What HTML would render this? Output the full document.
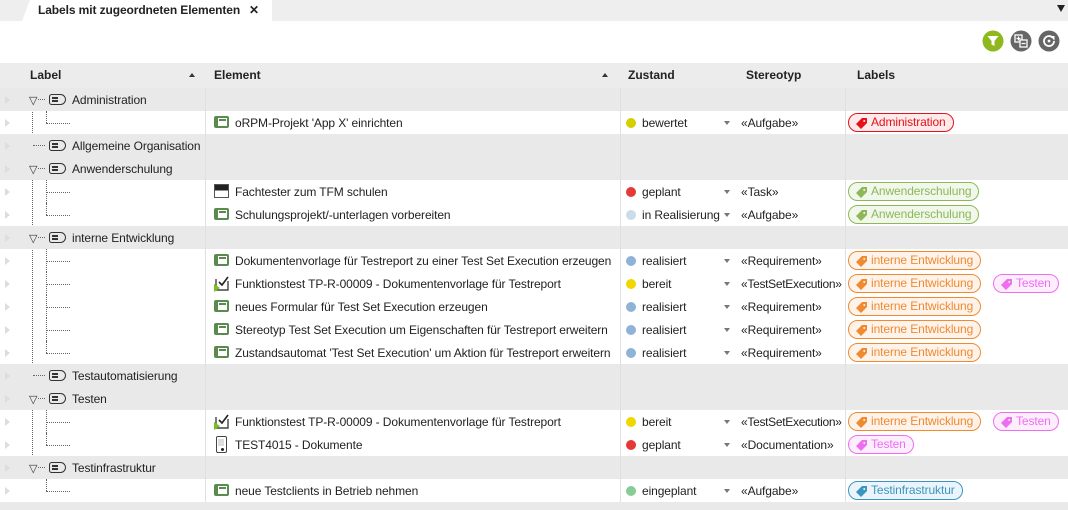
<!DOCTYPE html>
<html><head><meta charset="utf-8"><style>
*{margin:0;padding:0;box-sizing:border-box}
body{width:1068px;height:510px;overflow:hidden;background:#fff;font-family:"Segoe UI","Liberation Sans",sans-serif;font-size:12px;color:#222;position:relative}
.a{position:absolute;white-space:nowrap}
.row{position:absolute;left:0;width:1068px;height:23px}
.g{background:#e9e9e9}
.t{position:absolute;top:5px;white-space:nowrap;line-height:15px;letter-spacing:-0.1px}
.tri{position:absolute;left:5px;top:8px;width:0;height:0;border-left:5px solid #ddd;border-top:4px solid transparent;border-bottom:4px solid transparent}
.vl{position:absolute;width:1px;background:#e0e0e0;top:0;height:23px}
.dot{position:absolute;left:626px;top:7px;width:10px;height:10px;border-radius:50%}
.dd{position:absolute;left:724px;top:10px;border-top:4px solid #777;border-left:3.5px solid transparent;border-right:3.5px solid transparent}
.pill{position:absolute;top:2px;height:19px;border-radius:10px;border:1px solid;padding:0 7px 0 22px;line-height:17px;font-size:12px;letter-spacing:-0.1px}
.pill svg{position:absolute;left:6px;top:3px}
.ico{position:absolute;left:214px;top:5px;width:15px;height:12px;border:2px solid #5a8a4e;border-left-width:4px;border-radius:2px;background:#fff}
.ico:after{content:"";position:absolute;left:1px;top:1px;width:7px;height:1.5px;background:#5a8a4e}
.lab{position:absolute;top:6px;width:17px;height:11px;border:1.5px solid #333;border-radius:3px 6px 6px 3px}
.lab:before{content:"";position:absolute;left:2px;top:2px;width:6px;height:1.5px;background:#333;box-shadow:0 3px 0 #333}
.dv{position:absolute;border-left:1px dotted #666}
.dh{position:absolute;border-top:1px dotted #666}
.exp{position:absolute;left:29px;top:6px;font-size:11px;color:#333}
</style></head><body>
<div class="a" style="left:0;top:0;width:1068px;height:21px;background:#eeeeee"></div>
<div class="a" style="left:22px;top:0;width:250px;height:21px;background:#fff;clip-path:polygon(8px 0,100% 0,100% 100%,0 100%)"></div>
<div class="a" style="left:38px;top:3px;font-weight:bold;font-size:12px;letter-spacing:-0.1px">Labels mit zugeordneten Elementen</div>
<div class="a" style="left:249px;top:3px;font-weight:bold;font-size:12px">✕</div>
<div class="a" style="left:1057px;top:5px;border-top:7px solid #222;border-left:4px solid transparent;border-right:4px solid transparent"></div>
<svg class="a" style="left:982px;top:30px" width="22" height="22"><circle cx="11" cy="11" r="10.5" fill="#8fb81e"/><path d="M5.5 6h11l-4 5v5l-3-1.5v-3.5z" fill="#fff"/></svg>
<svg class="a" style="left:1010px;top:30px" width="22" height="22"><circle cx="11" cy="11" r="10.5" fill="#666"/><rect x="5" y="5" width="7" height="7" fill="none" stroke="#fff" stroke-width="1.3"/><rect x="10" y="10" width="7" height="7" fill="#666" stroke="#fff" stroke-width="1.3"/><path d="M6.5 8.5h4M8.5 6.5v4M11.5 13.5h4" stroke="#fff" stroke-width="1.2"/></svg>
<svg class="a" style="left:1038px;top:30px" width="22" height="22"><circle cx="11" cy="11" r="10.5" fill="#666"/><path d="M14.5 7.5A5 5 0 1 0 16 11" fill="none" stroke="#fff" stroke-width="1.8"/><path d="M12 6h4.5v4.5z" fill="#fff"/><circle cx="11" cy="11" r="1.4" fill="#fff"/></svg>
<div class="a" style="left:0;top:63px;width:1068px;height:25px;background:#ececec"></div>
<div class="a" style="left:30px;top:68px;font-weight:bold">Label</div>
<div class="a" style="left:189px;top:73px;border-bottom:4px solid #333;border-left:3.5px solid transparent;border-right:3.5px solid transparent"></div>
<div class="a" style="left:214px;top:68px;font-weight:bold">Element</div>
<div class="a" style="left:602px;top:73px;border-bottom:4px solid #333;border-left:3.5px solid transparent;border-right:3.5px solid transparent"></div>
<div class="a" style="left:628px;top:68px;font-weight:bold">Zustand</div>
<div class="a" style="left:746px;top:68px;font-weight:bold">Stereotyp</div>
<div class="a" style="left:857px;top:68px;font-weight:bold">Labels</div>

<svg width="0" height="0" style="position:absolute"><defs><path id="tg" d="M1 7L7 1h5v5l-6 6z M9.2 3a1 1 0 1 0 .1 0z" fill-rule="evenodd"/></defs></svg>

<div class="dv" style="left:32px;top:107px;height:362px"></div>

<div class="row g" style="top:88px"><div class="tri"></div><span class="exp">▽</span><div class="dh" style="left:38px;top:11px;width:7px"></div><div class="lab" style="left:49px"></div><span class="t" style="left:72px">Administration</span><div class="vl" style="left:205px"></div><div class="vl" style="left:620px"></div><div class="vl" style="left:845px"></div></div>
<div class="row" style="top:111px"><div class="tri"></div><div class="dv" style="left:46px;top:0;height:12px"></div><div class="dh" style="left:46px;top:12px;width:24px"></div><div class="vl" style="left:205px"></div><div class="ico"></div><span class="t" style="left:235px">oRPM-Projekt 'App X' einrichten</span><div class="vl" style="left:620px"></div><div class="dot" style="background:#d4d000"></div><span class="t" style="left:642px">bewertet</span><div class="dd"></div><span class="t" style="left:741px">«Aufgabe»</span><div class="vl" style="left:845px"></div><span class="pill" style="left:848px;color:#e8101a;border-color:#e8101a;background:#fdeaea"><svg width="13" height="13" fill="#e8101a"><use href="#tg"/></svg>Administration</span></div>
<div class="row g" style="top:134px"><div class="tri"></div><div class="dh" style="left:33px;top:11px;width:12px"></div><div class="lab" style="left:49px"></div><span class="t" style="left:72px">Allgemeine Organisation</span><div class="vl" style="left:205px"></div><div class="vl" style="left:620px"></div><div class="vl" style="left:845px"></div></div>
<div class="row g" style="top:157px"><div class="tri"></div><span class="exp">▽</span><div class="dh" style="left:38px;top:11px;width:7px"></div><div class="lab" style="left:49px"></div><span class="t" style="left:72px">Anwenderschulung</span><div class="vl" style="left:205px"></div><div class="vl" style="left:620px"></div><div class="vl" style="left:845px"></div></div>
<div class="row" style="top:180px"><div class="tri"></div><div class="dv" style="left:46px;top:0;height:23px"></div><div class="dh" style="left:46px;top:12px;width:24px"></div><div class="vl" style="left:205px"></div><div class="a" style="left:214px;top:4px;width:15px;height:14px;border:1.5px solid #555;background:linear-gradient(#222 0 45%,#fff 45%)"></div><span class="t" style="left:235px">Fachtester zum TFM schulen</span><div class="vl" style="left:620px"></div><div class="dot" style="background:#e53935"></div><span class="t" style="left:642px">geplant</span><div class="dd"></div><span class="t" style="left:741px">«Task»</span><div class="vl" style="left:845px"></div><span class="pill" style="left:848px;color:#8cb85a;border-color:#8cb85a;background:#f1f7ea"><svg width="13" height="13" fill="#8cb85a"><use href="#tg"/></svg>Anwenderschulung</span></div>
<div class="row" style="top:203px"><div class="tri"></div><div class="dv" style="left:46px;top:0;height:12px"></div><div class="dh" style="left:46px;top:12px;width:24px"></div><div class="vl" style="left:205px"></div><div class="ico"></div><span class="t" style="left:235px">Schulungsprojekt/-unterlagen vorbereiten</span><div class="vl" style="left:620px"></div><div class="dot" style="background:#c9dcec"></div><span class="t" style="left:642px">in Realisierung</span><div class="dd"></div><span class="t" style="left:741px">«Aufgabe»</span><div class="vl" style="left:845px"></div><span class="pill" style="left:848px;color:#8cb85a;border-color:#8cb85a;background:#f1f7ea"><svg width="13" height="13" fill="#8cb85a"><use href="#tg"/></svg>Anwenderschulung</span></div>
<div class="row g" style="top:226px"><div class="tri"></div><span class="exp">▽</span><div class="dh" style="left:38px;top:11px;width:7px"></div><div class="lab" style="left:49px"></div><span class="t" style="left:72px">interne Entwicklung</span><div class="vl" style="left:205px"></div><div class="vl" style="left:620px"></div><div class="vl" style="left:845px"></div></div>

<div class="row" style="top:249px"><div class="tri"></div><div class="dv" style="left:46px;top:0;height:23px"></div><div class="dh" style="left:46px;top:12px;width:24px"></div><div class="vl" style="left:205px"></div><div class="ico"></div><span class="t" style="left:235px">Dokumentenvorlage für Testreport zu einer Test Set Execution erzeugen</span><div class="vl" style="left:620px"></div><div class="dot" style="background:#8fb3d6"></div><span class="t" style="left:642px">realisiert</span><div class="dd"></div><span class="t" style="left:741px">«Requirement»</span><div class="vl" style="left:845px"></div><span class="pill" style="left:848px;color:#f08a30;border-color:#f08a30;background:#fef3ea"><svg width="13" height="13" fill="#f08a30"><use href="#tg"/></svg>interne Entwicklung</span></div>
<div class="row" style="top:272px"><div class="tri"></div><div class="dv" style="left:46px;top:0;height:23px"></div><div class="dh" style="left:46px;top:12px;width:24px"></div><div class="vl" style="left:205px"></div><svg class="a" style="left:213px;top:3px" width="18" height="17"><path d="M3 4v11h12V6" fill="none" stroke="#444" stroke-width="1.4"/><path d="M6 7l3 3 6-8" fill="none" stroke="#222" stroke-width="1.6"/><path d="M1 9l6 4-6 4z" fill="#7bbf1e"/></svg><span class="t" style="left:235px">Funktionstest TP-R-00009 - Dokumentenvorlage für Testreport</span><div class="vl" style="left:620px"></div><div class="dot" style="background:#f2d600"></div><span class="t" style="left:642px">bereit</span><div class="dd"></div><span class="t" style="left:741px;letter-spacing:-0.3px">«TestSetExecution»</span><div class="vl" style="left:845px"></div><span class="pill" style="left:848px;color:#f08a30;border-color:#f08a30;background:#fef3ea"><svg width="13" height="13" fill="#f08a30"><use href="#tg"/></svg>interne Entwicklung</span><span class="pill" style="left:993px;color:#ee6ef0;border-color:#ee6ef0;background:#fdeefd"><svg width="13" height="13" fill="#ee6ef0"><use href="#tg"/></svg>Testen</span></div>
<div class="row" style="top:295px"><div class="tri"></div><div class="dv" style="left:46px;top:0;height:23px"></div><div class="dh" style="left:46px;top:12px;width:24px"></div><div class="vl" style="left:205px"></div><div class="ico"></div><span class="t" style="left:235px">neues Formular für Test Set Execution erzeugen</span><div class="vl" style="left:620px"></div><div class="dot" style="background:#8fb3d6"></div><span class="t" style="left:642px">realisiert</span><div class="dd"></div><span class="t" style="left:741px">«Requirement»</span><div class="vl" style="left:845px"></div><span class="pill" style="left:848px;color:#f08a30;border-color:#f08a30;background:#fef3ea"><svg width="13" height="13" fill="#f08a30"><use href="#tg"/></svg>interne Entwicklung</span></div>
<div class="row" style="top:318px"><div class="tri"></div><div class="dv" style="left:46px;top:0;height:23px"></div><div class="dh" style="left:46px;top:12px;width:24px"></div><div class="vl" style="left:205px"></div><div class="ico"></div><span class="t" style="left:235px">Stereotyp Test Set Execution um Eigenschaften für Testreport erweitern</span><div class="vl" style="left:620px"></div><div class="dot" style="background:#8fb3d6"></div><span class="t" style="left:642px">realisiert</span><div class="dd"></div><span class="t" style="left:741px">«Requirement»</span><div class="vl" style="left:845px"></div><span class="pill" style="left:848px;color:#f08a30;border-color:#f08a30;background:#fef3ea"><svg width="13" height="13" fill="#f08a30"><use href="#tg"/></svg>interne Entwicklung</span></div>
<div class="row" style="top:341px"><div class="tri"></div><div class="dv" style="left:46px;top:0;height:12px"></div><div class="dh" style="left:46px;top:12px;width:24px"></div><div class="vl" style="left:205px"></div><div class="ico"></div><span class="t" style="left:235px">Zustandsautomat 'Test Set Execution' um Aktion für Testreport erweitern</span><div class="vl" style="left:620px"></div><div class="dot" style="background:#8fb3d6"></div><span class="t" style="left:642px">realisiert</span><div class="dd"></div><span class="t" style="left:741px">«Requirement»</span><div class="vl" style="left:845px"></div><span class="pill" style="left:848px;color:#f08a30;border-color:#f08a30;background:#fef3ea"><svg width="13" height="13" fill="#f08a30"><use href="#tg"/></svg>interne Entwicklung</span></div>
<div class="row g" style="top:364px"><div class="tri"></div><div class="dh" style="left:33px;top:11px;width:12px"></div><div class="lab" style="left:49px"></div><span class="t" style="left:72px">Testautomatisierung</span><div class="vl" style="left:205px"></div><div class="vl" style="left:620px"></div><div class="vl" style="left:845px"></div></div>
<div class="row g" style="top:387px"><div class="tri"></div><span class="exp">▽</span><div class="dh" style="left:38px;top:11px;width:7px"></div><div class="lab" style="left:49px"></div><span class="t" style="left:72px">Testen</span><div class="vl" style="left:205px"></div><div class="vl" style="left:620px"></div><div class="vl" style="left:845px"></div></div>
<div class="row" style="top:410px"><div class="tri"></div><div class="dv" style="left:46px;top:0;height:23px"></div><div class="dh" style="left:46px;top:12px;width:24px"></div><div class="vl" style="left:205px"></div><svg class="a" style="left:213px;top:3px" width="18" height="17"><path d="M3 4v11h12V6" fill="none" stroke="#444" stroke-width="1.4"/><path d="M6 7l3 3 6-8" fill="none" stroke="#222" stroke-width="1.6"/><path d="M1 9l6 4-6 4z" fill="#7bbf1e"/></svg><span class="t" style="left:235px">Funktionstest TP-R-00009 - Dokumentenvorlage für Testreport</span><div class="vl" style="left:620px"></div><div class="dot" style="background:#f2d600"></div><span class="t" style="left:642px">bereit</span><div class="dd"></div><span class="t" style="left:741px;letter-spacing:-0.3px">«TestSetExecution»</span><div class="vl" style="left:845px"></div><span class="pill" style="left:848px;color:#f08a30;border-color:#f08a30;background:#fef3ea"><svg width="13" height="13" fill="#f08a30"><use href="#tg"/></svg>interne Entwicklung</span><span class="pill" style="left:993px;color:#ee6ef0;border-color:#ee6ef0;background:#fdeefd"><svg width="13" height="13" fill="#ee6ef0"><use href="#tg"/></svg>Testen</span></div>
<div class="row" style="top:433px"><div class="tri"></div><div class="dv" style="left:46px;top:0;height:12px"></div><div class="dh" style="left:46px;top:12px;width:24px"></div><div class="vl" style="left:205px"></div><div class="a" style="left:216px;top:3px;width:11px;height:17px;border:1.5px solid #444;border-radius:2px"><div class="a" style="left:1px;top:2px;width:6px;height:7px;background:#ddd"></div><div class="a" style="left:4px;top:11px;width:3px;height:3px;background:#222;border-radius:50%"></div></div><span class="t" style="left:235px">TEST4015 - Dokumente</span><div class="vl" style="left:620px"></div><div class="dot" style="background:#e53935"></div><span class="t" style="left:642px">geplant</span><div class="dd"></div><span class="t" style="left:741px">«Documentation»</span><div class="vl" style="left:845px"></div><span class="pill" style="left:848px;color:#ee6ef0;border-color:#ee6ef0;background:#fdeefd"><svg width="13" height="13" fill="#ee6ef0"><use href="#tg"/></svg>Testen</span></div>
<div class="row g" style="top:456px"><div class="tri"></div><span class="exp">▽</span><div class="dh" style="left:38px;top:11px;width:7px"></div><div class="lab" style="left:49px"></div><span class="t" style="left:72px">Testinfrastruktur</span><div class="vl" style="left:205px"></div><div class="vl" style="left:620px"></div><div class="vl" style="left:845px"></div></div>
<div class="row" style="top:479px"><div class="tri"></div><div class="dv" style="left:46px;top:0;height:12px"></div><div class="dh" style="left:46px;top:12px;width:24px"></div><div class="vl" style="left:205px"></div><div class="ico"></div><span class="t" style="left:235px">neue Testclients in Betrieb nehmen</span><div class="vl" style="left:620px"></div><div class="dot" style="background:#86cc94"></div><span class="t" style="left:642px">eingeplant</span><div class="dd"></div><span class="t" style="left:741px">«Aufgabe»</span><div class="vl" style="left:845px"></div><span class="pill" style="left:848px;color:#3a96c0;border-color:#3a96c0;background:#eaf4fa"><svg width="13" height="13" fill="#3a96c0"><use href="#tg"/></svg>Testinfrastruktur</span></div>
<div class="a" style="left:0;top:502px;width:1068px;height:8px;background:#e9e9e9"></div>
</body></html>
